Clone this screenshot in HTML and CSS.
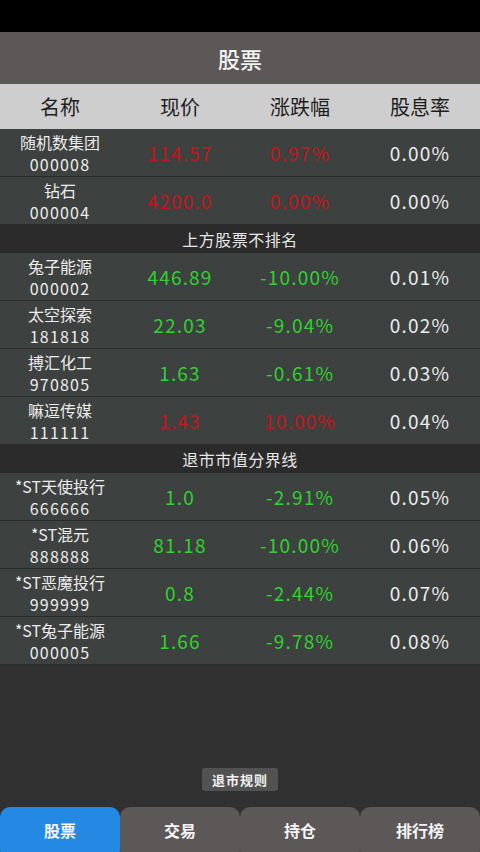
FILE: index.html
```html
<!DOCTYPE html>
<html lang="zh">
<head>
<meta charset="utf-8">
<title>股票</title>
<link rel="stylesheet" href="styles.css">
</head>
<body>
<div class="app">
  <div class="status"></div>
  <div class="title">股票</div>
  <div class="thead">
    <div class="cell">名称</div>
    <div class="cell">现价</div>
    <div class="cell">涨跌幅</div>
    <div class="cell">股息率</div>
  </div>
  <div class="list">
    <div class="row">
      <div class="cell name"><span>随机数集团</span><span class="code">000008</span></div>
      <div class="cell num red">114.57</div>
      <div class="cell num red">0.97%</div>
      <div class="cell num white">0.00%</div>
    </div>
    <div class="row">
      <div class="cell name"><span>钻石</span><span class="code">000004</span></div>
      <div class="cell num red">4200.0</div>
      <div class="cell num red">0.00%</div>
      <div class="cell num white">0.00%</div>
    </div>
    <div class="sep">上方股票不排名</div>
    <div class="row">
      <div class="cell name"><span>兔子能源</span><span class="code">000002</span></div>
      <div class="cell num green">446.89</div>
      <div class="cell num green">-10.00%</div>
      <div class="cell num white">0.01%</div>
    </div>
    <div class="row">
      <div class="cell name"><span>太空探索</span><span class="code">181818</span></div>
      <div class="cell num green">22.03</div>
      <div class="cell num green">-9.04%</div>
      <div class="cell num white">0.02%</div>
    </div>
    <div class="row">
      <div class="cell name"><span>搏汇化工</span><span class="code">970805</span></div>
      <div class="cell num green">1.63</div>
      <div class="cell num green">-0.61%</div>
      <div class="cell num white">0.03%</div>
    </div>
    <div class="row">
      <div class="cell name"><span>嘛逗传媒</span><span class="code">111111</span></div>
      <div class="cell num red">1.43</div>
      <div class="cell num red">10.00%</div>
      <div class="cell num white">0.04%</div>
    </div>
    <div class="sep">退市市值分界线</div>
    <div class="row">
      <div class="cell name"><span>*ST天使投行</span><span class="code">666666</span></div>
      <div class="cell num green">1.0</div>
      <div class="cell num green">-2.91%</div>
      <div class="cell num white">0.05%</div>
    </div>
    <div class="row">
      <div class="cell name"><span>*ST混元</span><span class="code">888888</span></div>
      <div class="cell num green">81.18</div>
      <div class="cell num green">-10.00%</div>
      <div class="cell num white">0.06%</div>
    </div>
    <div class="row">
      <div class="cell name"><span>*ST恶魔投行</span><span class="code">999999</span></div>
      <div class="cell num green">0.8</div>
      <div class="cell num green">-2.44%</div>
      <div class="cell num white">0.07%</div>
    </div>
    <div class="row">
      <div class="cell name"><span>*ST兔子能源</span><span class="code">000005</span></div>
      <div class="cell num green">1.66</div>
      <div class="cell num green">-9.78%</div>
      <div class="cell num white">0.08%</div>
    </div>
  </div>
  <div class="spacer">
    <div class="rule-btn">退市规则</div>
  </div>
  <div class="nav">
    <div class="tab active">股票</div>
    <div class="tab">交易</div>
    <div class="tab">持仓</div>
    <div class="tab">排行榜</div>
  </div>
</div>
</body>
</html>
```

FILE: styles.css
```css
html, body {
  margin: 0;
  padding: 0;
  background: #323131;
}
body {
  font-family: "Noto Sans CJK SC", "Noto Sans", sans-serif;
  width: 480px;
  height: 852px;
  overflow: hidden;
}
.app {
  display: flex;
  flex-direction: column;
  height: 852px;
  overflow: hidden;
}
.status {
  height: 32px;
  background: #000;
  flex: none;
}
.title {
  height: 52px;
  flex: none;
  background: #5c5857;
  color: #f2f2f2;
  font-size: 22px;
  font-weight: 500;
  display: flex;
  align-items: center;
  justify-content: center;
}
.thead {
  height: 45px;
  flex: none;
  background: #cecece;
  color: #1e1e1e;
  font-size: 20px;
  display: grid;
  grid-template-columns: repeat(4, 1fr);
  align-items: center;
}
.cell {
  text-align: center;
}
.list {
  flex: none;
  display: flex;
  flex-direction: column;
}
.row {
  height: 47px;
  border-bottom: 1px solid #2a2c2b;
  background: #3d413f;
  display: grid;
  grid-template-columns: repeat(4, 1fr);
  align-items: center;
}
.name {
  display: flex;
  flex-direction: column;
  align-items: center;
  color: #ececec;
  font-size: 16px;
  line-height: 22px;
}
.code {
  font-size: 16px;
  letter-spacing: 1.2px;
}
.num {
  font-size: 19px;
  letter-spacing: 1.2px;
}
.red { color: #c4161c; }
.green { color: #2fd22f; }
.white { color: #ececec; }
.sep {
  height: 28px;
  background: #2b2b2b;
  color: #e6e6e6;
  font-size: 16px;
  display: flex;
  align-items: center;
  justify-content: center;
  letter-spacing: 0.5px;
}
.spacer {
  flex: 1;
  background: #323131;
  display: flex;
  align-items: flex-end;
  justify-content: center;
  padding-bottom: 16px;
}
.rule-btn {
  width: 76px;
  height: 23px;
  background: #535252;
  color: #f0f0f0;
  font-size: 13px;
  font-weight: 700;
  border-radius: 3px;
  display: flex;
  align-items: center;
  justify-content: center;
  letter-spacing: 1px;
}
.nav {
  flex: none;
  height: 45px;
  display: grid;
  grid-template-columns: repeat(4, 1fr);
  background: #323131;
}
.tab {
  height: 52px;
  border-radius: 10px;
  background: #5c5857;
  color: #f4f4f4;
  font-size: 16px;
  font-weight: 700;
  display: flex;
  align-items: flex-start;
  justify-content: center;
  padding-top: 11px;
  box-sizing: border-box;
}
.tab.active {
  background: #2389e2;
}
```
